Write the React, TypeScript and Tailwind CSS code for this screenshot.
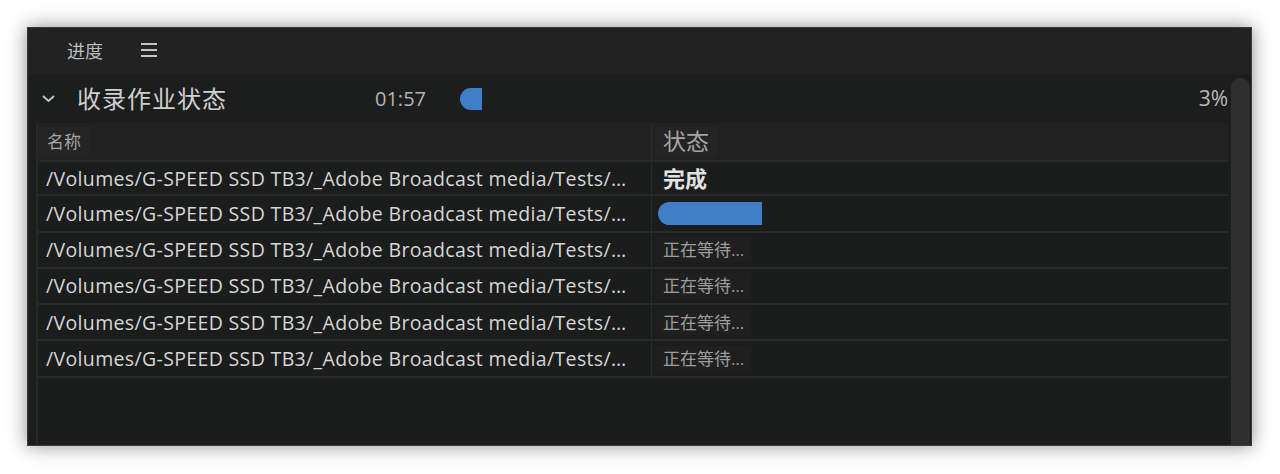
const rows = [
  { status: "done" },
  { status: "running" },
  { status: "waiting" },
  { status: "waiting" },
  { status: "waiting" },
  { status: "waiting" }
];

const path = "/Volumes/G-SPEED SSD TB3/_Adobe Broadcast media/Tests/…";

const font = { fontFamily: '"Open Sans", "Noto Sans CJK SC", sans-serif' };

const StatusCell = ({ status }: { status: string }) => {
  if (status === "done") {
    return (
      <span className="pl-[11px] text-[22px] font-semibold text-[#e2e2e2]">完成</span>
    );
  }
  if (status === "running") {
    return (
      <div className="ml-[6px] h-[23px] w-[104px] rounded-l-full bg-[#3e7fc8]" />
    );
  }
  return (
    <span className="ml-[4px] bg-[#1f1f1f] px-[7px] text-[17px] text-[#9d9d9d]">
      正在等待…
    </span>
  );
};

const App = () => {
  return (
    <main className="h-screen w-screen bg-white pl-[27px] pt-[27px]" style={font}>
      <div className="flex h-[419px] w-[1225px] flex-col border border-[#3c3c3c] bg-[#1c1d1d] shadow-[0_0_18px_rgba(0,0,0,0.45)]">
        {/* panel tab bar */}
        <div className="flex h-[46px] shrink-0 items-center bg-[#222222]">
          <span className="ml-[39px] text-[18px] text-[#bcbcbc]">进度</span>
          <svg
            className="ml-[38px] mb-[3px]"
            width="16"
            height="14"
            viewBox="0 0 16 14"
            fill="none"
            stroke="#c4c4c4"
            strokeWidth="2"
          >
            <line x1="0" y1="1" x2="16" y2="1" />
            <line x1="0" y1="7" x2="16" y2="7" />
            <line x1="0" y1="13" x2="16" y2="13" />
          </svg>
        </div>

        <div className="flex min-h-0 flex-1">
          <div className="flex min-w-0 flex-1 flex-col">
            {/* job header */}
            <div className="flex h-[49px] shrink-0 items-center bg-[#1c1d1d]">
              <svg
                className="ml-[14px]"
                width="13"
                height="7"
                viewBox="0 0 13 7"
                fill="none"
                stroke="#c8c8c8"
                strokeWidth="1.8"
              >
                <path d="M1 1l5.5 5 5.5-5" />
              </svg>
              <span className="ml-[22px] text-[24px] tracking-[1px] text-[#cfcfcf]">
                收录作业状态
              </span>
              <span className="ml-[148px] text-[20px] text-[#b4b4b4]">01:57</span>
              <div className="ml-[34px] h-[22px] w-[22px] rounded-l-full bg-[#3e7fc8]" />
              <span className="ml-auto mr-[3px] text-[21px] text-[#bababa]">3%</span>
            </div>

            {/* table */}
            <div className="ml-[8px] mr-[3px] flex flex-1 flex-col border-l-2 border-[#262727] bg-[#1b1c1c]">
              <div className="flex h-[37px] shrink-0 items-center bg-[#212121]">
                <div className="flex h-full w-[614px] items-center border-r border-[#2c2c2c]">
                  <span className="ml-[1px] flex h-[30px] items-center bg-[#242424] px-[8px] text-[17px] text-[#a4a4a4]">
                    名称
                  </span>
                </div>
                <span className="ml-[3px] flex h-[30px] items-center bg-[#242424] px-[8px] text-[23px] text-[#a4a4a4]">
                  状态
                </span>
              </div>

              {rows.map((row, i) => (
                <div
                  key={i}
                  className={`flex h-[36.3px] shrink-0 items-center border-b-2 border-[#282929] ${
                    i === 0 ? "border-t-2 rounded-tl-[4px]" : ""
                  }`}
                >
                  <div className="flex h-full w-[614px] items-center overflow-hidden border-r border-[#2a2a2a]">
                    <span className="truncate pl-[8px] text-[19.5px] tracking-[0.35px] text-[#d6d6d6]">
                      {path}
                    </span>
                  </div>
                  <StatusCell status={row.status} />
                </div>
              ))}
            </div>
          </div>

          {/* scrollbar */}
          <div className="mr-[1px] mt-[4px] w-[19px] shrink-0 rounded-t-full bg-[#2f2f2f]" />
        </div>
      </div>
    </main>
  );
};

export default App;
